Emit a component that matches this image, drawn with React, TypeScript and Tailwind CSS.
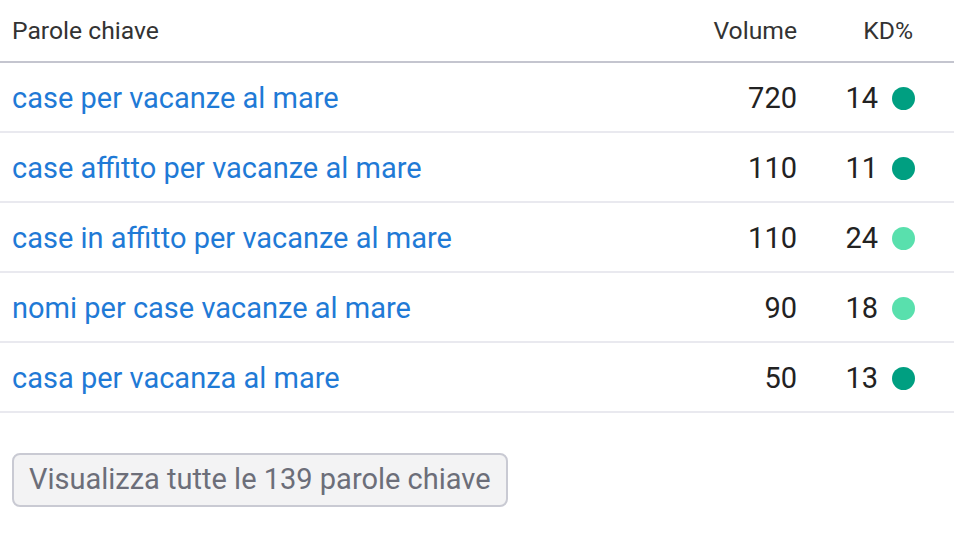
type Row = {
  keyword: string;
  volume: number;
  kd: number;
};

const rows: Row[] = [
  { keyword: "case per vacanze al mare", volume: 720, kd: 14 },
  { keyword: "case affitto per vacanze al mare", volume: 110, kd: 11 },
  { keyword: "case in affitto per vacanze al mare", volume: 110, kd: 24 },
  { keyword: "nomi per case vacanze al mare", volume: 90, kd: 18 },
  { keyword: "casa per vacanza al mare", volume: 50, kd: 13 },
];

// easy keywords get the dark dot, the rest the light one
const dotColor = (kd: number) => (kd < 15 ? "bg-[#009f81]" : "bg-[#59e0ad]");

export default function App() {
  return (
    <div
      className="w-[954px] bg-white"
      style={{ fontFamily: "Roboto, 'Noto Sans', sans-serif" }}
    >
      <div className="flex items-center h-[63px] border-b-2 border-[#c4c5cf] text-[24.7px] text-[#333333]">
        <div className="flex-1 pl-[12px]">Parole chiave</div>
        <div className="w-[120px] text-right">Volume</div>
        <div className="w-[118px] pr-[2px] text-right">KD%</div>
        <div className="w-[39px]" />
      </div>

      {rows.map((row) => (
        <div
          key={row.keyword}
          className="flex items-center h-[70px] pt-[3px] border-b-2 border-[#e9e9ef] text-[29px]"
        >
          <div className="flex-1 pl-[12px] text-[#1f7ad6]">{row.keyword}</div>
          <div className="w-[120px] text-right text-[#222222]">{row.volume}</div>
          <div className="w-[118px] flex items-center justify-end gap-[14px] text-[#222222]">
            <span>{row.kd}</span>
            <span className={`w-[23px] h-[23px] rounded-full ${dotColor(row.kd)}`} />
          </div>
          <div className="w-[39px]" />
        </div>
      ))}

      <div className="pt-[40px] pl-[12px]">
        <button className="h-[54px] px-[15px] rounded-[8px] border-2 border-[#c9cad3] bg-[#f3f3f4] text-[29px] text-[#6c6e79]">
          Visualizza tutte le 139 parole chiave
        </button>
      </div>
    </div>
  );
}
